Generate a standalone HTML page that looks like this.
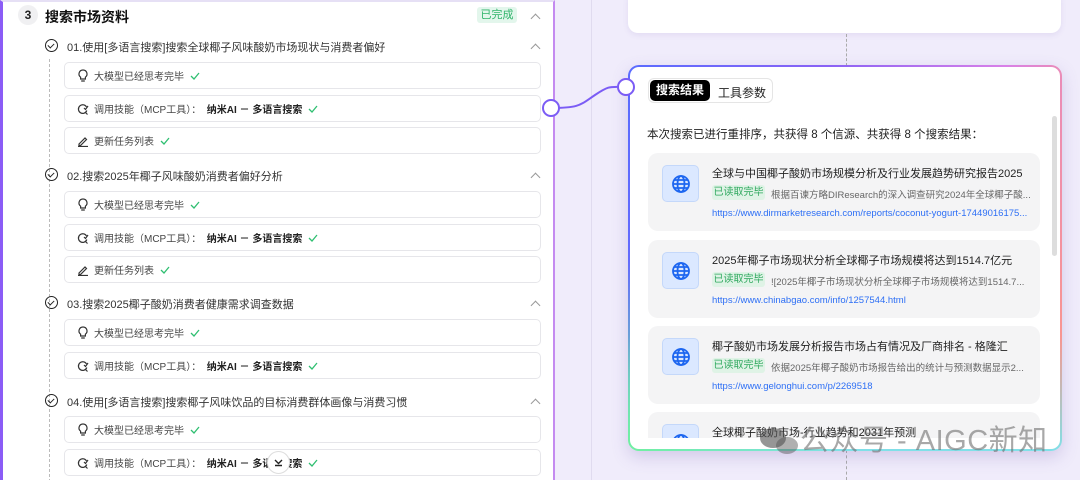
<!DOCTYPE html>
<html><head><meta charset="utf-8"><style>
*{box-sizing:border-box;margin:0;padding:0}
html,body{width:1080px;height:480px;overflow:hidden}
body{background:#f0ecfb;font-family:"Liberation Sans","Noto Sans CJK SC",sans-serif;position:relative;color:#222}
.abs{position:absolute}
#left{left:0;top:0;width:555px;height:480px;background:#fff;border-left:3px solid #8b5cf6;border-right:2px solid #c48af0;border-top:2px solid #e6e0f5;overflow:hidden}
.t{position:absolute;font-size:11px;color:#333;white-space:nowrap}
.box{position:absolute;left:64px;width:477px;height:27px;border:1px solid #e6e6ea;border-radius:5px;background:#fff;font-size:10px;color:#444;display:flex;align-items:center;padding-left:12px;white-space:nowrap}
.box svg{margin-right:5px}
.ok{margin-left:6px;width:10px;height:8px}
.chev{position:absolute;width:7px;height:7px;border-left:1.3px solid #999;border-top:1.3px solid #999;transform:rotate(45deg)}
.ck{position:absolute;left:45px;width:13px;height:13px;border:1.6px solid #222;border-radius:50%}
.ck:after{content:"";position:absolute;left:3px;top:1.5px;width:3px;height:5px;border-right:1.5px solid #222;border-bottom:1.5px solid #222;transform:rotate(45deg)}
.card{position:absolute;left:648px;width:392px;height:78px;background:#f4f4f5;border-radius:10px}
.ic{position:absolute;left:14px;top:12px;width:37px;height:37px;background:#dbe8ff;border:1px solid #c4d8fa;border-radius:5px;display:flex;align-items:center;justify-content:center}
.ct{position:absolute;left:64px;top:12px;font-size:11px;color:#222;white-space:nowrap}
.bd{position:absolute;left:64px;top:32px;width:53px;height:15px;background:#dff3e6;color:#2fa85e;font-size:10px;line-height:15px;text-align:center;border-radius:3px}
.ds{position:absolute;left:123px;top:34px;font-size:9.5px;color:#666;white-space:nowrap}
.url{position:absolute;left:64px;top:55px;font-size:9.5px;color:#2d6ff5;white-space:nowrap}
</style></head><body>
<svg width="0" height="0" style="position:absolute"><defs><symbol id="ok" viewBox="0 0 10 8"><path d="M1 4l3 3 5-6" fill="none" stroke="#2fbf71" stroke-width="1.3"/></symbol></defs></svg>
<div id="left" class="abs">
 <div class="abs" style="left:15px;top:3px;width:20px;height:20px;border-radius:50%;background:#f0f0f2;font-size:12px;font-weight:bold;text-align:center;line-height:20px">3</div>
 <div class="t" style="left:42px;top:5px;font-size:14px;font-weight:bold;color:#111">搜索市场资料</div>
 <div class="abs" style="left:474px;top:5px;width:40px;height:16px;background:#e3f6ec;color:#2fb46a;font-size:11px;line-height:16px;text-align:center;border-radius:3px">已完成</div>
 <div class="chev" style="left:529px;top:13px"></div>
 <div class="abs" style="left:46px;top:57px;height:423px;border-left:1px dashed #bbb"></div>
</div>
<div class="ck" style="top:39px"></div><div class="t" style="left:67px;top:39px">01.使用[多语言搜索]搜索全球椰子风味酸奶市场现状与消费者偏好</div><div class="chev" style="left:532px;top:45px"></div>
<div class="ck" style="top:168px"></div><div class="t" style="left:67px;top:168px">02.搜索2025年椰子风味酸奶消费者偏好分析</div><div class="chev" style="left:532px;top:174px"></div>
<div class="ck" style="top:296px"></div><div class="t" style="left:67px;top:296px">03.搜索2025椰子酸奶消费者健康需求调查数据</div><div class="chev" style="left:532px;top:302px"></div>
<div class="ck" style="top:394px"></div><div class="t" style="left:67px;top:394px">04.使用[多语言搜索]搜索椰子风味饮品的目标消费群体画像与消费习惯</div><div class="chev" style="left:532px;top:400px"></div>

<div class="box" style="top:62px"><svg width="12" height="13" viewBox="0 0 12 13"><path d="M6 1a4 4 0 0 0-2.4 7.2V10h4.8V8.2A4 4 0 0 0 6 1zM4.2 12h3.6" fill="none" stroke="#333" stroke-width="1.2"/></svg>大模型已经思考完毕<svg class="ok"><use href="#ok"/></svg></div>
<div class="box" style="top:95px"><svg width="12" height="12" viewBox="0 0 12 12"><path d="M9.5 4A4.3 4.3 0 1 0 9.8 7.5M7 5l1.5 1.5L11 3M8 9l2.5 2.5" fill="none" stroke="#333" stroke-width="1.2"/></svg>调用技能（MCP工具）：&nbsp;&nbsp;<b style="color:#222">纳米AI － 多语言搜索</b><svg class="ok"><use href="#ok"/></svg></div>
<div class="box" style="top:127px"><svg width="12" height="12" viewBox="0 0 12 12"><path d="M2 9l6-6 1.5 1.5-6 6H2zM1 11.5h10" fill="none" stroke="#333" stroke-width="1.2"/></svg>更新任务列表<svg class="ok"><use href="#ok"/></svg></div>

<div class="box" style="top:191px"><svg width="12" height="13" viewBox="0 0 12 13"><path d="M6 1a4 4 0 0 0-2.4 7.2V10h4.8V8.2A4 4 0 0 0 6 1zM4.2 12h3.6" fill="none" stroke="#333" stroke-width="1.2"/></svg>大模型已经思考完毕<svg class="ok"><use href="#ok"/></svg></div>
<div class="box" style="top:224px"><svg width="12" height="12" viewBox="0 0 12 12"><path d="M9.5 4A4.3 4.3 0 1 0 9.8 7.5M7 5l1.5 1.5L11 3M8 9l2.5 2.5" fill="none" stroke="#333" stroke-width="1.2"/></svg>调用技能（MCP工具）：&nbsp;&nbsp;<b style="color:#222">纳米AI － 多语言搜索</b><svg class="ok"><use href="#ok"/></svg></div>
<div class="box" style="top:256px"><svg width="12" height="12" viewBox="0 0 12 12"><path d="M2 9l6-6 1.5 1.5-6 6H2zM1 11.5h10" fill="none" stroke="#333" stroke-width="1.2"/></svg>更新任务列表<svg class="ok"><use href="#ok"/></svg></div>

<div class="box" style="top:319px"><svg width="12" height="13" viewBox="0 0 12 13"><path d="M6 1a4 4 0 0 0-2.4 7.2V10h4.8V8.2A4 4 0 0 0 6 1zM4.2 12h3.6" fill="none" stroke="#333" stroke-width="1.2"/></svg>大模型已经思考完毕<svg class="ok"><use href="#ok"/></svg></div>
<div class="box" style="top:352px"><svg width="12" height="12" viewBox="0 0 12 12"><path d="M9.5 4A4.3 4.3 0 1 0 9.8 7.5M7 5l1.5 1.5L11 3M8 9l2.5 2.5" fill="none" stroke="#333" stroke-width="1.2"/></svg>调用技能（MCP工具）：&nbsp;&nbsp;<b style="color:#222">纳米AI － 多语言搜索</b><svg class="ok"><use href="#ok"/></svg></div>

<div class="box" style="top:416px"><svg width="12" height="13" viewBox="0 0 12 13"><path d="M6 1a4 4 0 0 0-2.4 7.2V10h4.8V8.2A4 4 0 0 0 6 1zM4.2 12h3.6" fill="none" stroke="#333" stroke-width="1.2"/></svg>大模型已经思考完毕<svg class="ok"><use href="#ok"/></svg></div>
<div class="box" style="top:449px"><svg width="12" height="12" viewBox="0 0 12 12"><path d="M9.5 4A4.3 4.3 0 1 0 9.8 7.5M7 5l1.5 1.5L11 3M8 9l2.5 2.5" fill="none" stroke="#333" stroke-width="1.2"/></svg>调用技能（MCP工具）：&nbsp;&nbsp;<b style="color:#222">纳米AI － 多语言搜索</b><svg class="ok"><use href="#ok"/></svg></div>
<div class="abs" style="left:267px;top:451px;width:23px;height:23px;border-radius:50%;background:#fff;border:1px solid #ddd"><svg width="21" height="21" viewBox="0 0 21 21"><path d="M7 8l3.5 3.5L14 8M7 13.5h7" fill="none" stroke="#222" stroke-width="1.4"/></svg></div>

<!-- right side -->
<div class="abs" style="left:591px;top:0;height:480px;border-left:1px solid #e0dbef"></div>
<div class="abs" style="left:628px;top:-10px;width:433px;height:43px;background:#fff;border-radius:10px;box-shadow:0 2px 6px rgba(120,100,180,.12)"></div>
<div class="abs" style="left:846px;top:34px;height:32px;border-left:1px dashed #aaa"></div>
<div class="abs" style="left:846px;top:450px;height:30px;border-left:1px dashed #aaa"></div>
<div class="abs" style="left:628px;top:65px;width:434px;height:386px;border-radius:11px;background:linear-gradient(to top right,#70f0a0 0%,rgba(112,240,160,0) 25%),linear-gradient(to bottom,rgba(0,0,0,0) 70%,#80e0e8 100%),linear-gradient(100deg,#5a6cff 0%,#8a62f5 40%,#d880e8 75%,#ff9a80 100%);box-shadow:0 6px 16px rgba(120,100,180,.25)">
 <div style="position:absolute;left:2px;top:2px;right:2px;bottom:2px;background:#fff;border-radius:9px"></div>
</div>
<div class="abs" style="left:648px;top:78px;width:125px;height:25px;border:1px solid #e5e5e5;border-radius:6px;background:#fff"></div>
<div class="abs" style="left:650px;top:80px;width:60px;height:21px;border-radius:5px;background:#000;color:#fff;font-size:12px;font-weight:bold;text-align:center;line-height:21px">搜索结果</div>
<div class="t" style="left:718px;top:84px;font-size:12px;color:#222">工具参数</div>
<div class="t" style="left:647px;top:126px;font-size:11.5px;color:#222">本次搜索已进行重排序，共获得 8 个信源、共获得 8 个搜索结果：</div>
<div class="abs" style="left:1052px;top:116px;width:5px;height:140px;background:#ddd;border-radius:3px"></div>

<div class="abs" style="left:640px;top:140px;width:410px;height:298px;overflow:hidden">
<div class="card" style="left:8px;top:13px"><div class="ic"><svg width="20" height="20" viewBox="0 0 20 20" fill="none" stroke="#1d66f0" stroke-width="1.8"><circle cx="10" cy="10" r="8"/><ellipse cx="10" cy="10" rx="3.5" ry="8"/><path d="M2 10h16M3.5 6h13M3.5 14h13"/></svg></div><div class="ct">全球与中国椰子酸奶市场规模分析及行业发展趋势研究报告2025</div><div class="bd">已读取完毕</div><div class="ds">根据百谏方略DIResearch的深入调查研究2024年全球椰子酸...</div><div class="url">https://www.dirmarketresearch.com/reports/coconut-yogurt-17449016175...</div></div>
<div class="card" style="left:8px;top:100px"><div class="ic"><svg width="20" height="20" viewBox="0 0 20 20" fill="none" stroke="#1d66f0" stroke-width="1.8"><circle cx="10" cy="10" r="8"/><ellipse cx="10" cy="10" rx="3.5" ry="8"/><path d="M2 10h16M3.5 6h13M3.5 14h13"/></svg></div><div class="ct">2025年椰子市场现状分析全球椰子市场规模将达到1514.7亿元</div><div class="bd">已读取完毕</div><div class="ds">![2025年椰子市场现状分析全球椰子市场规模将达到1514.7...</div><div class="url">https://www.chinabgao.com/info/1257544.html</div></div>
<div class="card" style="left:8px;top:186px"><div class="ic"><svg width="20" height="20" viewBox="0 0 20 20" fill="none" stroke="#1d66f0" stroke-width="1.8"><circle cx="10" cy="10" r="8"/><ellipse cx="10" cy="10" rx="3.5" ry="8"/><path d="M2 10h16M3.5 6h13M3.5 14h13"/></svg></div><div class="ct">椰子酸奶市场发展分析报告市场占有情况及厂商排名 - 格隆汇</div><div class="bd">已读取完毕</div><div class="ds">依据2025年椰子酸奶市场报告给出的统计与预测数据显示2...</div><div class="url">https://www.gelonghui.com/p/2269518</div></div>
<div class="card" style="left:8px;top:272px"><div class="ic"><svg width="20" height="20" viewBox="0 0 20 20" fill="none" stroke="#1d66f0" stroke-width="1.8"><circle cx="10" cy="10" r="8"/><ellipse cx="10" cy="10" rx="3.5" ry="8"/><path d="M2 10h16M3.5 6h13M3.5 14h13"/></svg></div><div class="ct">全球椰子酸奶市场-行业趋势和2031年预测</div></div>
</div>

<!-- watermark -->
<div class="abs" style="left:760px;top:428px;width:26px;height:20px;border-radius:50%;background:rgba(80,80,80,.6)"></div>
<div class="abs" style="left:776px;top:437px;width:22px;height:17px;border-radius:50%;background:rgba(80,80,80,.45)"></div>
<div class="abs" style="left:800px;top:417px;font-size:29px;color:rgba(110,110,110,.6);white-space:nowrap;letter-spacing:0.5px">公众号 - AIGC新知</div>

<!-- connector -->
<svg class="abs" style="left:540px;top:75px" width="100" height="45"><path d="M11 33C40 33 40 30 55 20S70 12 86 12" fill="none" stroke="#7b5cf5" stroke-width="2"/><circle cx="11" cy="33" r="8" fill="#fff" stroke="#7b5cf5" stroke-width="2"/><circle cx="86" cy="12" r="8" fill="#fff" stroke="#7b5cf5" stroke-width="2"/></svg>
</body></html>
